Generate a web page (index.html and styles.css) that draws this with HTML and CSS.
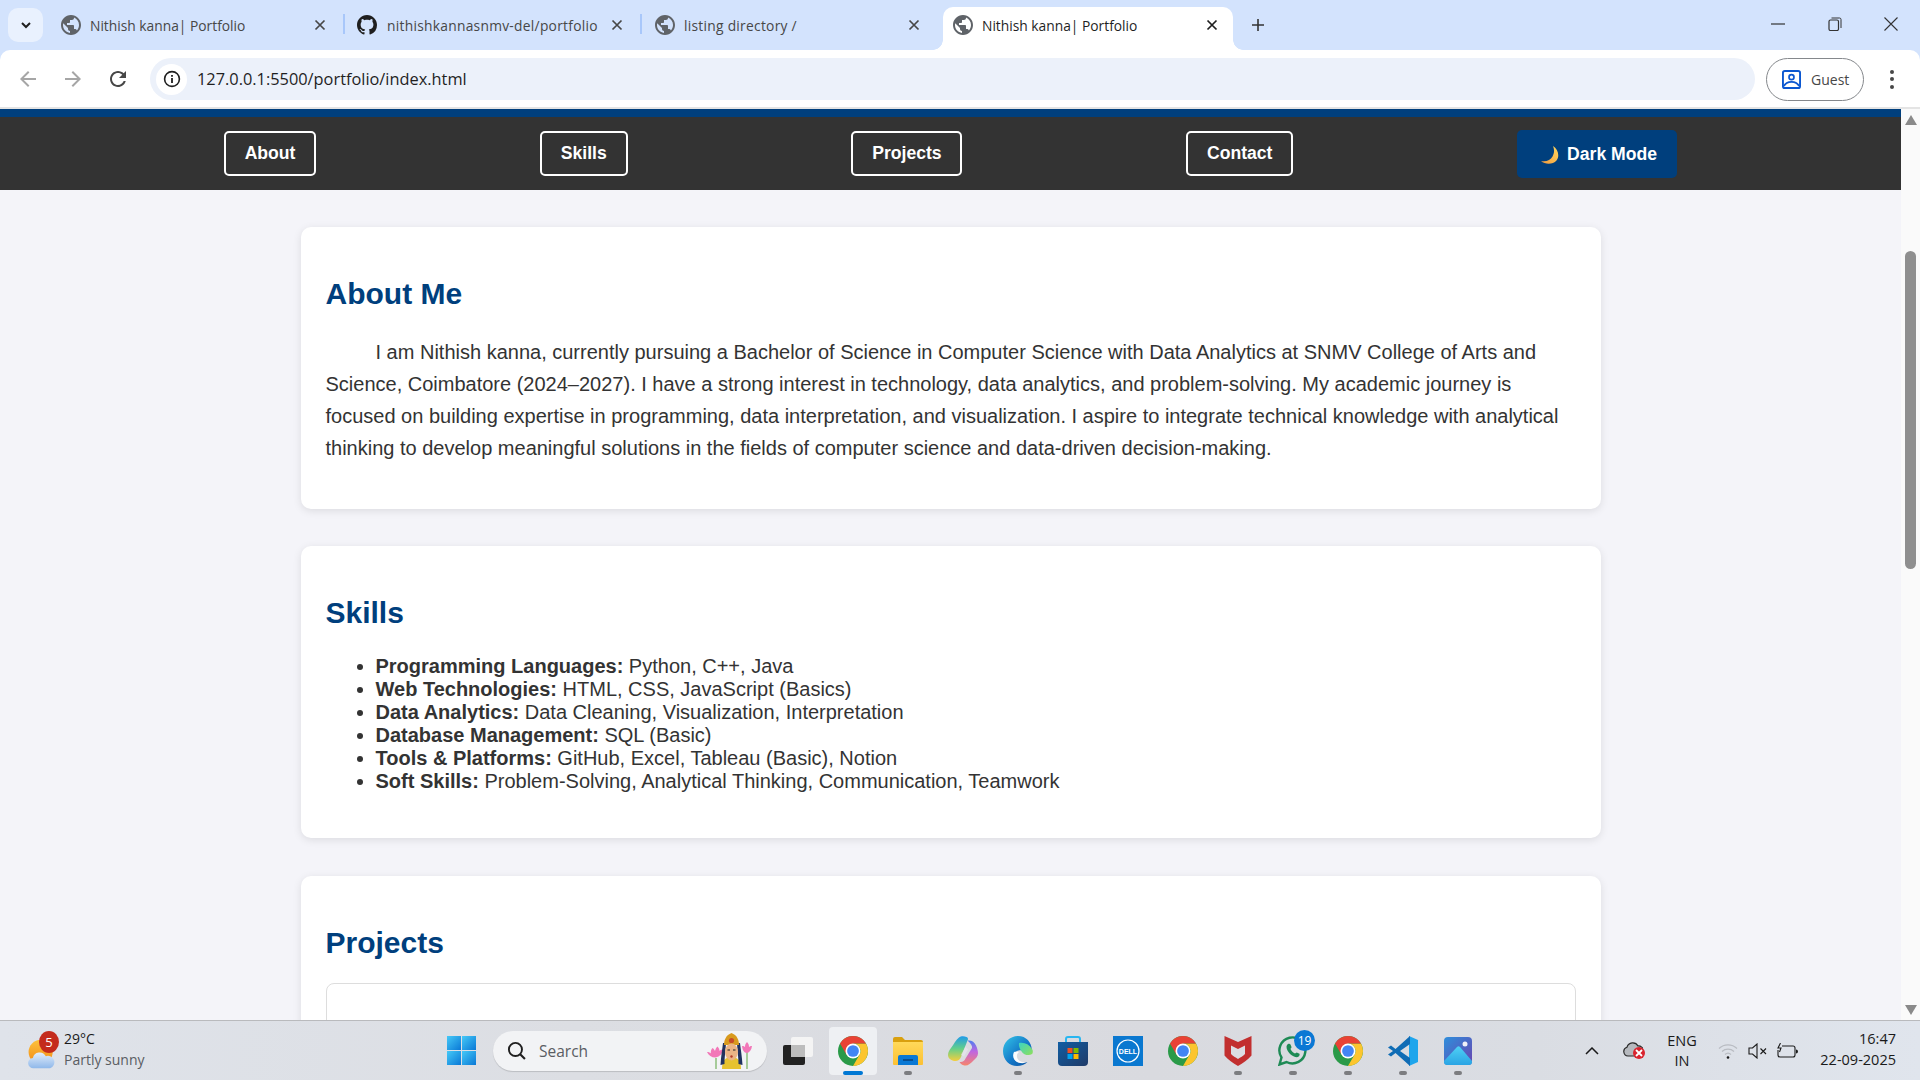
FILE: index.html
```html
<!DOCTYPE html>
<html lang="en">
<head>
<meta charset="utf-8">
<title>Nithish kanna| Portfolio</title>
<link rel="stylesheet" href="styles.css">
</head>
<body>
<svg class="defs" width="0" height="0">
  <defs>
    <symbol id="globe" viewBox="2 2 20 20"><path d="M12 2C6.48 2 2 6.48 2 12s4.48 10 10 10 10-4.48 10-10S17.52 2 12 2zm-1 17.93c-3.95-.49-7-3.85-7-7.93 0-.62.08-1.21.21-1.79L9 15v1c0 1.1.9 2 2 2v1.93zm6.9-2.54c-.26-.81-1-1.39-1.9-1.39h-1v-3c0-.55-.45-1-1-1H8v-2h2c.55 0 1-.45 1-1V7h2c1.1 0 2-.9 2-2v-.41c2.93 1.19 5 4.06 5 7.41 0 2.08-.8 3.97-2.1 5.39z"/></symbol>
    <symbol id="x" viewBox="0 0 12 12"><path d="M1.5 1.5l9 9M10.5 1.5l-9 9" fill="none" stroke="currentColor" stroke-width="1.7"/></symbol>
    <symbol id="chrome" viewBox="2 2 44 44">
      <circle cx="24" cy="24" r="22" fill="#2a9a48"/>
      <path d="M43.05 13A22 22 0 0 1 24 46l9.53-16.5A11 11 0 0 0 24 13z" fill="#fcc52e"/>
      <path d="M24 2a22 22 0 0 1 19.05 11H24l-9.53 16.5L4.95 13A22 22 0 0 1 24 2z" fill="#e94235"/>
      <circle cx="24" cy="24" r="11" fill="#fff"/>
      <circle cx="24" cy="24" r="8.6" fill="#4285f4"/>
    </symbol>
    <linearGradient id="gEdge" x1="0" y1="0" x2="1" y2="1"><stop offset="0" stop-color="#33c6e8"/><stop offset=".55" stop-color="#1478c8"/><stop offset="1" stop-color="#0b4f9e"/></linearGradient>
    <linearGradient id="gEdge2" x1="0" y1="0" x2="1" y2="1"><stop offset="0" stop-color="#3bd3c4"/><stop offset="1" stop-color="#8fe05a"/></linearGradient>
    <linearGradient id="gCop" x1="0" y1="0" x2="0" y2="1"><stop offset="0" stop-color="#1f9be8"/><stop offset=".5" stop-color="#63cf8a"/><stop offset="1" stop-color="#f4cf3e"/></linearGradient>
    <linearGradient id="gCop2" x1="0" y1="0" x2="0" y2="1"><stop offset="0" stop-color="#4c7df0"/><stop offset=".45" stop-color="#c066e0"/><stop offset="1" stop-color="#f7856a"/></linearGradient>
    <linearGradient id="gStore" x1="0" y1="0" x2="1" y2="1"><stop offset="0" stop-color="#115ea3"/><stop offset="1" stop-color="#1f3a68"/></linearGradient>
    <linearGradient id="gFolder" x1="0" y1="0" x2="0" y2="1"><stop offset="0" stop-color="#ffd95a"/><stop offset="1" stop-color="#fcc033"/></linearGradient>
    <linearGradient id="gPhoto" x1="0" y1="0" x2="1" y2="1"><stop offset="0" stop-color="#2d8fdc"/><stop offset="1" stop-color="#6a44b0"/></linearGradient>
    <linearGradient id="gMount" x1="0" y1="0" x2="0" y2="1"><stop offset="0" stop-color="#4fd0f5"/><stop offset="1" stop-color="#2aa4e4"/></linearGradient>
    <linearGradient id="gSun" x1="0" y1="0" x2="0" y2="1"><stop offset="0" stop-color="#fcc23c"/><stop offset="1" stop-color="#f28a16"/></linearGradient>
    <linearGradient id="gCloud" x1="0" y1="0" x2="0" y2="1"><stop offset="0" stop-color="#e3eefb"/><stop offset="1" stop-color="#8fb8ea"/></linearGradient>
    <linearGradient id="gMoon" x1="1" y1="0" x2="0" y2="1"><stop offset="0" stop-color="#ffd75e"/><stop offset="1" stop-color="#f19a3e"/></linearGradient>
    <linearGradient id="gWinL" x1="0" y1="0" x2="1" y2="1"><stop offset="0" stop-color="#45c9f7"/><stop offset="1" stop-color="#0a78d6"/></linearGradient>
  </defs>
</svg>

<div class="tabstrip">
  <div class="tabsearch"><svg class="ic12" viewBox="0 0 12 12"><path d="M2 4l4 4 4-4" fill="none" stroke="#1f1f1f" stroke-width="2"/></svg></div>
  <div class="tab sep">
    <svg class="favicon"><use href="#globe"/></svg>
    <span class="tabtitle piped">Nithish kanna| Portfolio</span>
    <svg class="tabclose"><use href="#x"/></svg>
  </div>
  <div class="tab sep">
    <svg class="favicon dark" viewBox="0 0 16 16"><path d="M8 0C3.58 0 0 3.58 0 8c0 3.54 2.29 6.53 5.47 7.59.4.07.55-.17.55-.38 0-.19-.01-.82-.01-1.49-2.01.37-2.53-.49-2.69-.94-.09-.23-.48-.94-.82-1.13-.28-.15-.68-.52-.01-.53.63-.01 1.08.58 1.23.82.72 1.21 1.87.87 2.33.66.07-.52.28-.87.51-1.07-1.78-.2-3.64-.89-3.64-3.95 0-.87.31-1.59.82-2.15-.08-.2-.36-1.02.08-2.12 0 0 .67-.21 2.2.82.64-.18 1.32-.27 2-.27.68 0 1.36.09 2 .27 1.53-1.04 2.2-.82 2.2-.82.44 1.1.16 1.92.08 2.12.51.56.82 1.27.82 2.15 0 3.07-1.87 3.75-3.65 3.95.29.25.54.73.54 1.48 0 1.07-.01 1.93-.01 2.2 0 .21.15.46.55.38A8.013 8.013 0 0016 8c0-4.42-3.58-8-8-8z"/></svg>
    <span class="tabtitle">nithishkannasnmv-del/portfolio</span>
    <svg class="tabclose"><use href="#x"/></svg>
  </div>
  <div class="tab">
    <svg class="favicon"><use href="#globe"/></svg>
    <span class="tabtitle">listing directory /</span>
    <svg class="tabclose"><use href="#x"/></svg>
  </div>
  <div class="tab active">
    <svg class="favicon"><use href="#globe"/></svg>
    <span class="tabtitle piped">Nithish kanna| Portfolio</span>
    <svg class="tabclose"><use href="#x"/></svg>
  </div>
  <svg class="newtab" viewBox="0 0 14 14"><path d="M7 1v12M1 7h12" fill="none" stroke="#333" stroke-width="1.6"/></svg>
  <div class="winctrls">
    <svg class="winbtn" viewBox="0 0 14 14"><path d="M0 7h14" stroke="#333" stroke-width="1.2"/></svg>
    <svg class="winbtn" viewBox="0 0 14 14"><rect x="1" y="3" width="9.5" height="10.5" rx="1.5" fill="none" stroke="#333" stroke-width="1.2"/><path d="M3.5 1h8a1.5 1.5 0 0 1 1.5 1.5V11" fill="none" stroke="#333" stroke-width="1"/></svg>
    <svg class="winbtn" viewBox="0 0 14 14"><path d="M0.5 0.5l13 13M13.5 0.5l-13 13" stroke="#333" stroke-width="1.1"/></svg>
  </div>
</div>

<div class="toolbar">
  <div class="navbtn"><svg class="ic24 muted" viewBox="0 0 24 24"><path d="M20 11H7.83l5.59-5.59L12 4l-8 8 8 8 1.41-1.41L7.83 13H20v-2z"/></svg></div>
  <div class="navbtn"><svg class="ic24 muted flip" viewBox="0 0 24 24"><path d="M20 11H7.83l5.59-5.59L12 4l-8 8 8 8 1.41-1.41L7.83 13H20v-2z"/></svg></div>
  <div class="navbtn"><svg class="ic24 strong" viewBox="0 0 24 24"><path d="M17.65 6.35C16.2 4.9 14.21 4 12 4c-4.42 0-7.99 3.58-7.99 8s3.57 8 7.99 8c3.73 0 6.84-2.55 7.73-6h-2.08c-.82 2.33-3.04 4-5.65 4-3.31 0-6-2.69-6-6s2.69-6 6-6c1.66 0 3.14.69 4.22 1.78L13 11h7V4l-2.35 2.35z"/></svg></div>
  <div class="omnibox">
    <div class="siteinfo"><svg class="ic18" viewBox="0 0 18 18"><circle cx="9" cy="9" r="7.4" fill="none" stroke="#1f1f1f" stroke-width="1.6"/><path d="M9 8v5M9 5v1.8" stroke="#1f1f1f" stroke-width="1.8"/></svg></div>
    <span class="url">127.0.0.1:5500/portfolio/index.html</span>
  </div>
  <div class="guest">
    <svg class="guesticon" viewBox="0 0 20 20"><rect x="1" y="1" width="18" height="18" rx="2" fill="none" stroke="#0b57d0" stroke-width="2"/><circle cx="10" cy="7.5" r="2.6" fill="none" stroke="#0b57d0" stroke-width="1.8"/><path d="M2 17c1.5-3.2 4.5-4.5 8-4.5s6.500 1.300 8 4.500" fill="none" stroke="#0b57d0" stroke-width="1.8"/></svg>
    <span>Guest</span>
  </div>
  <div class="menudots"><i></i><i></i><i></i></div>
</div>

<div class="viewport">
  <div class="page">
    <nav class="sitenav">
      <a class="navlink">About</a>
      <a class="navlink">Skills</a>
      <a class="navlink">Projects</a>
      <a class="navlink">Contact</a>
      <button class="darkbtn"><svg class="moon" viewBox="0 0 18 18"><path d="M12 0c5 3 7 10 3.500 14.500C12 18.500 4.500 19 0 15c5 1 9.500-.5 11.500-4.500C13.500 7 13.500 3.500 12 0z" fill="url(#gMoon)"/></svg>Dark Mode</button>
    </nav>
    <main class="content">
      <section class="card">
        <h2>About Me</h2>
        <p class="about">I am Nithish kanna, currently pursuing a Bachelor of Science in Computer Science with Data Analytics at SNMV College of Arts and Science, Coimbatore (2024–2027). I have a strong interest in technology, data analytics, and problem-solving. My academic journey is focused on building expertise in programming, data interpretation, and visualization. I aspire to integrate technical knowledge with analytical thinking to develop meaningful solutions in the fields of computer science and data-driven decision-making.</p>
      </section>
      <section class="card">
        <h2>Skills</h2>
        <ul class="skills">
          <li><strong>Programming Languages:</strong> Python, C++, Java</li>
          <li><strong>Web Technologies:</strong> HTML, CSS, JavaScript (Basics)</li>
          <li><strong>Data Analytics:</strong> Data Cleaning, Visualization, Interpretation</li>
          <li><strong>Database Management:</strong> SQL (Basic)</li>
          <li><strong>Tools &amp; Platforms:</strong> GitHub, Excel, Tableau (Basic), Notion</li>
          <li><strong>Soft Skills:</strong> Problem-Solving, Analytical Thinking, Communication, Teamwork</li>
        </ul>
      </section>
      <section class="card">
        <h2 class="tight">Projects</h2>
        <div class="project"></div>
      </section>
    </main>
  </div>
  <div class="scrollbar">
    <svg class="sbarrow" viewBox="0 0 12 10"><path d="M6 0l6 10H0z"/></svg>
    <div class="sbthumb"></div>
    <svg class="sbarrow bottom" viewBox="0 0 12 10"><path d="M6 10L0 0h12z"/></svg>
  </div>
</div>

<footer class="taskbar">
  <div class="weather">
    <div class="wicon">
      <svg class="wsvg" viewBox="0 0 32 36"><circle cx="15" cy="15" r="14" fill="url(#gSun)"/><path d="M7 34a6 6 0 0 1-1-12 8 8 0 0 1 15-2 6.500 6.500 0 0 1 5 14z" fill="url(#gCloud)"/></svg>
      <span class="wbadge">5</span>
    </div>
    <div class="wtext"><span class="wtemp">29°C</span><span class="wdesc">Partly sunny</span></div>
  </div>
  <svg class="winlogo" viewBox="0 0 29 29"><rect width="14" height="14" fill="url(#gWinL)"/><rect x="15" width="14" height="14" fill="url(#gWinL)"/><rect y="15" width="14" height="14" fill="url(#gWinL)"/><rect x="15" y="15" width="14" height="14" fill="url(#gWinL)"/></svg>
  <div class="search">
    <svg class="searchicon" viewBox="0 0 18 18"><circle cx="8" cy="8" r="6.200" fill="none" stroke="#1f1f1f" stroke-width="1.800"/><path d="M12.500 12.500l4.500 4.500" stroke="#1f1f1f" stroke-width="2"/></svg>
    <span class="searchtext">Search</span>
    <svg class="deity" viewBox="0 0 50 36">
      <path d="M10 25v11M41 19v17" stroke="#5aa33f" stroke-width="1"/>
      <g fill="#f277b8"><path d="M1 19c2 0 3 .5 4 1.500-.5-2 0-4 1.500-5.500 1 .5 2 2 2.500 3 .5-2 1-3 2.500-4.500 1.500 1.500 2 3 2 4.500 1-1 2-1.500 3.500-1.500-.5 4-3 7-7.500 8-4 0-7-2-8.500-5.500z"/><path d="M36 13c1.500 0 2.500.5 3 1 0-2 .5-3.500 2-5 1.500 1.500 2 3 2 5 .5-.5 1.500-1 3-1-.5 4-2.500 6.500-5 7-3 0-4.500-3-5-7z"/></g>
      <path d="M16 36c0-8 3-12 9.500-12S35 28 35 36z" fill="#e6c22f"/>
      <path d="M17 10c-1 8-2 14-2.500 22l4-1c0-7 1-12 1.500-21zM34 10c1 8 2 14 2.500 22l-4-1c0-7-1-12-1.500-21z" fill="#20325f"/>
      <path d="M18 12c0-5 2-10 7.500-12C31 2 33 7 33 12z" fill="#d89a1e"/>
      <circle cx="25.500" cy="7.500" r="2.600" fill="#c64a2a"/>
      <ellipse cx="25.500" cy="19" rx="6.500" ry="8.500" fill="#eab486"/>
      <path d="M21.500 17h2.500M27 17h2.500" stroke="#222" stroke-width="1.200"/>
      <circle cx="25.500" cy="23.500" r="1.200" fill="#b43b2a"/>
    </svg>
  </div>
  <div class="appslot">
    <svg class="taskview" viewBox="0 0 30 28"><rect x="8" y="0" width="22" height="20" rx="2" fill="#f4f4f4"/><rect x="0" y="8" width="22" height="20" rx="2" fill="#222"/><rect x="8" y="8" width="14" height="12" fill="#bdbdbd"/></svg>
  </div>
  <div class="appslot activeapp"><svg class="appicon"><use href="#chrome"/></svg><i class="runbar"></i></div>
  <div class="appslot">
    <svg class="appicon" viewBox="0 0 30 30"><path d="M0 3a2 2 0 0 1 2-2h7l3 3h16a2 2 0 0 1 2 2v3H0z" fill="#d9a00f"/><path d="M0 6h30v22a1 1 0 0 1-1 1H1a1 1 0 0 1-1-1z" fill="url(#gFolder)"/><path d="M5 29v-8a2 2 0 0 1 2-2h16a2 2 0 0 1 2 2v8z" fill="#0a78d4"/><path d="M10 24h10" stroke="#08407a" stroke-width="1.500"/></svg>
    <i class="pip"></i>
  </div>
  <div class="appslot">
    <svg class="appicon" viewBox="0 0 30 30">
      <path d="M11 1.500c2-1.500 5-1.500 7.500-.5 1.500.5 2 2 1 3.500L13 21c-1 2.500-3 4-5.500 4-4 0-7.500-2.500-7.500-6 0-3 1.500-5 3-7 3-4 5-8.500 8-10.500z" fill="url(#gCop)"/>
      <path d="M19.500 4.500c4-.5 7 1.500 8.500 5 1.500 3 2 6 2 8 0 3-2.500 5-4.500 7-3 3-5.500 5.500-9 5-2.500-.5-4-1.500-5-3.500 3 .5 5-1 6-3.500L24 12c.5-2-1-4-4.500-7.500z" fill="url(#gCop2)"/>
      <path d="M13 19l4.500-8.500 2.500 3-4 7z" fill="#e6e4ee" opacity=".75"/>
    </svg>
  </div>
  <div class="appslot">
    <svg class="appicon" viewBox="0 0 30 30"><path d="M15 0C7 0 0 6.500 0 15c0 9 6.500 15 14 15 4 0 8-1.500 10.500-4-4 2-10 1.500-12.500-2-2-3-1.500-7 2-9 1-.5 3-1 6-.5 4 .5 7 1.500 8.500 1.500C30 8 24 0 15 0z" fill="url(#gEdge)"/><path d="M16 7c5-1 10 1 13 6 1 1 1 3 .5 4.500-1 1.500-3 1.500-6 1.500-3-.5-5-3.500-6-5-1-2-2-5-1.500-7z" fill="url(#gEdge2)"/><path d="M11 16c-2 4-.5 8 3 10 3 1.500 6 1 8.500 0-5 .5-8-2-8.500-5-.5-2 .5-4 2-5-2-.5-4-.5-5 0z" fill="#fff" opacity=".95"/></svg>
    <i class="pip"></i>
  </div>
  <div class="appslot">
    <svg class="appicon" viewBox="0 0 30 30"><path d="M8 7V3a2 2 0 0 1 2-2h10a2 2 0 0 1 2 2v4" fill="none" stroke="#29b6f0" stroke-width="2"/><path d="M0 6h30v20a4 4 0 0 1-4 4H4a4 4 0 0 1-4-4z" fill="url(#gStore)"/><rect x="9.500" y="12" width="5" height="5" fill="#f25022"/><rect x="15.500" y="12" width="5" height="5" fill="#7fba00"/><rect x="9.500" y="18" width="5" height="5" fill="#00a4ef"/><rect x="15.500" y="18" width="5" height="5" fill="#ffb900"/></svg>
  </div>
  <div class="appslot">
    <svg class="appicon" viewBox="0 0 30 30"><rect width="30" height="30" fill="#0a78d0"/><circle cx="15" cy="15" r="11" fill="none" stroke="#fff" stroke-width="1.200"/><text x="15" y="17.500" class="delltext" text-anchor="middle">DELL</text></svg>
  </div>
  <div class="appslot"><svg class="appicon"><use href="#chrome"/></svg></div>
  <div class="appslot">
    <svg class="appicon" viewBox="0 0 30 30"><path d="M1.500 0L15 6 28.500 0v19.500C25 24 20 27 15 30 10 27 5 24 1.500 19.500z" fill="#c22f2f"/><path d="M8 9.500l7 3.500 7-3.500v8.500c-2 2-4.500 3.500-7 5-2.500-1.500-5-3-7-5z" fill="#dcdee3"/></svg>
    <i class="pip"></i>
  </div>
  <div class="appslot">
    <svg class="appicon" viewBox="0 0 30 30"><path d="M1.500 28.500l2-7A13 13 0 1 1 8.500 26z" fill="none" stroke="#1e8a55" stroke-width="2.400"/><path d="M10 8c1-.5 2-.5 2.500.5l1 2.500c0 1-1 1.500-1 2 1 2 2.500 3.500 4.500 4.500.5 0 1.200-1 1.800-1l2.700 1.300c.5 1.500-.5 3-2.500 3.500-4.500 0-10.500-5.500-10.500-10.500 0-1.200.7-2.100 1.500-2.800z" fill="#1e8a55"/></svg>
    <span class="appbadge">19</span>
    <i class="pip"></i>
  </div>
  <div class="appslot"><svg class="appicon"><use href="#chrome"/></svg><i class="pip"></i></div>
  <div class="appslot">
    <svg class="appicon" viewBox="0 0 30 30"><path d="M21 0l9 4v22l-9 4V0z" fill="#1ea5ec"/><path d="M22 0L7.500 13 3 9.500 0 11.500 5 15 0 18.500l3 2L7.500 17 22 30V22L12 15 22 8z" fill="#0f6cb5"/></svg>
    <i class="pip"></i>
  </div>
  <div class="appslot">
    <svg class="appicon" viewBox="0 0 30 30"><rect x="1" y="1" width="28" height="28" rx="4" fill="url(#gPhoto)"/><path d="M1 25l13-14c1-1 2-1 3 0l12 14v1a3 3 0 0 1-3 3H4a3 3 0 0 1-3-3z" fill="url(#gMount)"/><circle cx="22" cy="8" r="2.500" fill="#f0f0f8"/></svg>
    <i class="pip"></i>
  </div>
  <div class="tray">
    <svg class="trayup" viewBox="0 0 14 8"><path d="M1 7l6-6 6 6" fill="none" stroke="#1a1a1a" stroke-width="1.500"/></svg>
    <div class="traycloud">
      <svg class="cloudsvg" viewBox="0 0 20 16"><path d="M5 15a4.500 4.500 0 0 1-1-8.800A6 6 0 0 1 15 5a5 5 0 0 1 1 10z" fill="#b6b9be" stroke="#2a2a2a" stroke-width="1.200"/></svg>
      <span class="clouderr"><svg class="errx" viewBox="0 0 10 10"><path d="M2.500 2.500l5 5M7.500 2.500l-5 5" stroke="#fff" stroke-width="1.500"/></svg></span>
    </div>
    <div class="lang"><span>ENG</span><span>IN</span></div>
    <svg class="trayglyph wifi" viewBox="0 0 20 16"><g fill="none" stroke="#b9bcc2" stroke-width="1.200"><path d="M1 5.500a13 13 0 0 1 18 0"/><path d="M4 8.500a9 9 0 0 1 12 0"/><path d="M7 11.500a4.500 4.500 0 0 1 6 0"/></g><circle cx="10" cy="14.500" r="1.300" fill="#1a1a1a"/></svg>
    <svg class="trayglyph speaker" viewBox="0 0 20 16"><path d="M1 5h3.500L9 1v14l-4.500-4H1z" fill="none" stroke="#1a1a1a" stroke-width="1.100"/><path d="M12.500 5.500l5.500 5.500M18 5.500l-5.500 5.500" stroke="#1a1a1a" stroke-width="1.100"/></svg>
    <svg class="trayglyph battery" viewBox="0 0 22 16"><path d="M6 3h11a2 2 0 0 1 2 2v7a2 2 0 0 1-2 2H4a2 2 0 0 1-2-2V7" fill="none" stroke="#1a1a1a" stroke-width="1.100"/><path d="M20 6.500a2 2 0 0 1 0 4z" fill="#1a1a1a"/><path d="M4.500 0L2 5h3L3.500 9" fill="none" stroke="#1a1a1a" stroke-width="1.100"/></svg>
    <div class="clock"><span>16:47</span><span>22-09-2025</span></div>
  </div>
</footer>
</body>
</html>
```
FILE: styles.css
```css
* { box-sizing: border-box; }
html, body { margin: 0; padding: 0; height: 100%; }
body {
  width: 1920px;
  height: 1080px;
  overflow: hidden;
  display: flex;
  flex-direction: column;
  background: #d3e3fd;
  font-family: "Liberation Sans", Arial, sans-serif;
}
.defs { position: absolute; }

/* tab strip */
.tabstrip { height: 50px; flex: none; display: flex; align-items: flex-end; padding-left: 8px; color: #474747; font-family: "Open Sans", sans-serif; }
.tabsearch { width: 35px; height: 34px; align-self: flex-start; margin: 8px 5px 0 0; border-radius: 10px; background: #e9f1fe; display: flex; align-items: center; justify-content: center; }
.ic12 { width: 12px; height: 12px; }
.tab { width: 297px; height: 43px; flex: none; position: relative; display: flex; align-items: center; padding: 0 19px 7px 13px; }
.tab.sep::after { content: ""; position: absolute; right: 0; top: 7px; width: 2px; height: 20px; background: #a8c7fa; }
.favicon { width: 20px; height: 20px; flex: none; margin-right: 9px; fill: #5f6368; }
.favicon.dark { fill: #1f1f1f; margin: 0 10px 0 -1px; }
.tabtitle { font-size: 13.800px; letter-spacing: .27px; white-space: nowrap; overflow: hidden; }
.tabtitle.piped { letter-spacing: 0; }
.tabclose { width: 12px; height: 12px; flex: none; margin-left: auto; color: #474747; }
.tab.active { width: 290px; margin-left: 4px; padding: 0 15px 7px 10px; background: #fff; border-radius: 10px 10px 0 0; color: #1f1f1f; }
.tab.active .tabclose { color: #1f1f1f; }
.tab.active::before, .tab.active::after { content: ""; position: absolute; bottom: 0; width: 10px; height: 10px; }
.tab.active::before { left: -10px; background: radial-gradient(circle at 0 0, transparent 9.500px, #fff 10px); }
.tab.active::after { right: -10px; background: radial-gradient(circle at 100% 0, transparent 9.500px, #fff 10px); }
.newtab { width: 14px; height: 14px; flex: none; margin: 0 0 18px 18px; }
.winctrls { margin-left: auto; align-self: flex-start; display: flex; gap: 42.500px; padding: 17px 22px 0 0; }
.winbtn { width: 14px; height: 14px; }

/* toolbar */
.toolbar { height: 59px; flex: none; display: flex; align-items: center; padding: 1px 0 0 5px; background: #fff; border-bottom: 2px solid #e4e4e4; border-radius: 10px 10px 0 0; }
.navbtn { width: 45px; height: 40px; flex: none; display: flex; align-items: center; justify-content: center; }
.ic24 { width: 24px; height: 24px; }
.muted { fill: #a6a6a6; }
.strong { fill: #474747; }
.flip { transform: scaleX(-1); }
.omnibox { width: 1605px; height: 42px; flex: none; margin-left: 10px; display: flex; align-items: center; padding-left: 6px; border-radius: 21px; background: #ecf1fa; }
.siteinfo { width: 31px; height: 31px; border-radius: 50%; background: #fff; display: flex; align-items: center; justify-content: center; }
.ic18 { width: 18px; height: 18px; }
.url { margin-left: 10px; font: 16.350px "Open Sans", sans-serif; color: #1f1f1f; white-space: nowrap; }
.guest { width: 98px; height: 43px; flex: none; margin-left: 11px; display: flex; align-items: center; padding-left: 15px; border: 1.500px solid #85888c; border-radius: 22px; font: 14px "Open Sans", sans-serif; color: #474747; }
.guesticon { width: 19px; height: 19px; margin-right: 10px; }
.menudots { flex: none; margin-left: 26px; display: flex; flex-direction: column; gap: 3.500px; }
.menudots i { width: 4px; height: 4px; border-radius: 50%; background: #474747; }

/* viewport */
.viewport { height: 911px; flex: none; display: flex; overflow: hidden; background: #f4f4f9; }
.page { width: 1901px; flex: none; }
.sitenav { height: 81px; border-top: 8px solid #003f7d; background: #333; display: flex; align-items: center; justify-content: space-evenly; }
.navlink { display: block; padding: 10px 18.750px; border: 2px solid #fff; border-radius: 5px; font-size: 17.600px; font-weight: 700; color: #fff; }
.darkbtn { display: flex; align-items: center; height: 48px; padding: 1px 20px 0; border: 0; border-radius: 5px; background: #003f7d; color: #fff; font: 700 17.600px "Liberation Sans", Arial, sans-serif; }
.moon { width: 18px; height: 18px; margin: 1px 8px 0 4px; }
.content { padding-top: 36.600px; }
.card { width: 1300px; margin: 0 auto 37.500px; padding: 25px; background: #fff; border-radius: 10px; box-shadow: 0 2px 8px rgba(0, 0, 0, .1); }
.card h2 { margin: 25px 0; font-size: 30px; font-weight: 700; color: #003f7d; }
.card h2.tight { margin-bottom: 23.500px; }
.about { margin: 20px 0; font-size: 20px; line-height: 32px; color: #333; text-indent: 50px; }
.skills { margin: 20px 0; padding-left: 50px; font-size: 20px; color: #333; }
.skills strong { font-weight: 700; }
.project { height: 300px; border: 1px solid #ddd; border-radius: 8px; }

/* scrollbar */
.scrollbar { width: 19px; flex: none; display: flex; flex-direction: column; align-items: center; padding-top: 6px; background: #fafafa; }
.sbarrow { width: 12px; height: 10px; flex: none; fill: #8a8a8a; }
.sbthumb { width: 11px; height: 318px; margin-top: 126px; border-radius: 6px; background: #8f8f8f; }
.sbarrow.bottom { margin-top: auto; margin-bottom: 5px; }

/* taskbar */
.taskbar { height: 60px; flex: none; display: flex; align-items: center; border-top: 1px solid #b9babd; background: linear-gradient(90deg, #dfe3ea, #dcdee3 30%, #d9dadf 60%, #dadde3 80%, #e0e5ed); font-family: "Open Sans", sans-serif; color: #1a1a1a; }
.weather { width: 447px; flex: none; display: flex; align-items: center; padding-left: 27px; }
.wicon { width: 37px; height: 40px; position: relative; flex: none; }
.wsvg { position: absolute; left: 0; top: 8px; width: 29px; height: 31px; }
.wbadge { position: absolute; left: 12px; top: 0; width: 20px; height: 22px; border-radius: 50%; background: #c42b1c; color: #fff; font-size: 13px; line-height: 22px; text-align: center; }
.wtext { display: flex; flex-direction: column; margin-top: -4px; font-size: 14px; line-height: 21px; }
.wtemp { color: #1a1a1a; }
.wdesc { color: #5a5d63; }
.winlogo { width: 29px; height: 29px; flex: none; }
.search { width: 274px; height: 40px; flex: none; margin: 0 3px 0 17px; display: flex; align-items: center; padding-left: 14px; border-radius: 20px; background: #f2f3f5; box-shadow: 0 1px 1px rgba(0, 0, 0, .15); }
.searchicon { width: 19px; height: 19px; }
.searchtext { margin-left: 13px; font-size: 15.500px; color: #5a5d63; }
.deity { width: 50px; height: 36px; margin-left: auto; margin-right: 11px; }
.appslot { width: 55px; height: 48px; flex: none; position: relative; display: flex; align-items: center; justify-content: center; }
.activeapp::before { content: ""; position: absolute; left: 3.500px; top: 0; width: 48px; height: 48px; border-radius: 4px; background: #eef0f3; }
.appicon { width: 30px; height: 30px; position: relative; }
.taskview { width: 30px; height: 28px; }
.runbar { position: absolute; left: 17.500px; bottom: 0; width: 20px; height: 4px; border-radius: 2px; background: #0078d4; }
.pip { position: absolute; left: 23.500px; bottom: 0; width: 8px; height: 4px; border-radius: 2px; background: #7c7d80; }
.appbadge { position: absolute; left: 29px; top: 3px; width: 21px; height: 21px; border-radius: 50%; background: #0a78d4; color: #fff; font-size: 12px; line-height: 21px; text-align: center; }
.delltext { font: 700 7px "Liberation Sans", Arial, sans-serif; fill: #fff; }
.tray { flex: 1; display: flex; align-items: center; padding-left: 100px; }
.trayup { width: 14px; height: 8px; flex: none; }
.traycloud { width: 24px; height: 24px; flex: none; margin-left: 24px; position: relative; }
.cloudsvg { position: absolute; left: 0; top: 2px; width: 20px; height: 16px; }
.clouderr { position: absolute; left: 10px; top: 8px; width: 12px; height: 12px; border-radius: 50%; background: #d9232e; display: flex; }
.errx { width: 12px; height: 12px; }
.lang { width: 40px; flex: none; margin-left: 15px; display: flex; flex-direction: column; align-items: center; font-size: 14.500px; line-height: 20px; }
.trayglyph { flex: none; height: 16px; }
.wifi { width: 20px; margin-left: 16px; }
.speaker { width: 20px; margin-left: 10px; }
.battery { width: 22px; margin-left: 8px; }
.clock { margin-left: auto; margin-top: -4px; padding-right: 24px; display: flex; flex-direction: column; align-items: flex-end; font-size: 14.500px; line-height: 21px; }
```
